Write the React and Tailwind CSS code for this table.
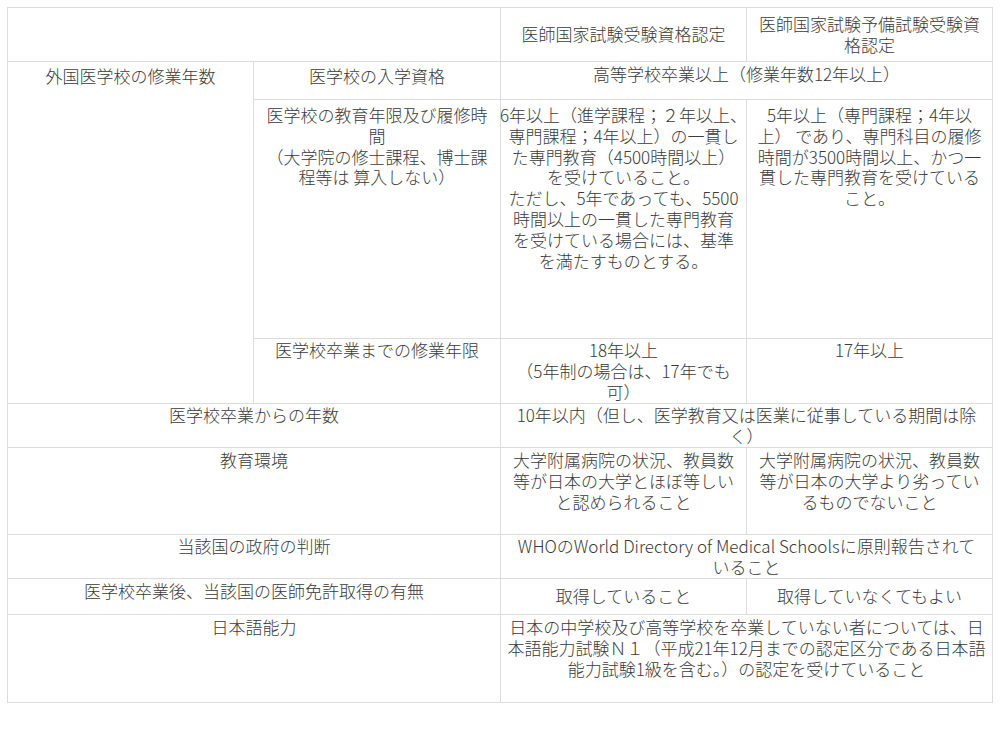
import clsx from 'clsx'

function Cell({ className = '', lines = [], middle = false }) {
  return (
    <div className={clsx('bg-white flex flex-col', middle && 'justify-center', className)}>
      {lines.map((line, i) => (
        <div key={i} className="flex justify-center whitespace-nowrap">
          {line}
        </div>
      ))}
    </div>
  )
}

function App() {
  return (
    <div className="min-h-screen bg-white pt-[7px] pl-[7px] font-['Noto_Sans_CJK_JP',sans-serif] text-[17px] font-light leading-[20.8px] text-[#3a3a3a]">
      <div className="grid w-[986px] grid-cols-[245px_246px_245px_245px] grid-rows-[53px_37px_238px_64px_43px_86px_43px_35px_87px] gap-px bg-[#dcdcdc] p-px">
        {/* header */}
        <Cell className="col-span-2" />
        <Cell middle lines={['医師国家試験受験資格認定']} />
        <Cell middle lines={['医師国家試験予備試験受験資', '格認定']} />

        {/* 修業年数 */}
        <Cell className="row-span-3 pt-[4px]" lines={['外国医学校の修業年数']} />
        <Cell className="pt-[4px]" lines={['医学校の入学資格']} />
        <Cell className="col-span-2 pt-[2px]" lines={['高等学校卒業以上（修業年数12年以上）']} />

        <Cell
          className="pt-[5px]"
          lines={['医学校の教育年限及び履修時', '間', '（大学院の修士課程、博士課', '程等は 算入しない）']}
        />
        <Cell
          className="pt-[5px]"
          lines={[
            '6年以上（進学課程；２年以上、',
            '専門課程；4年以上）の一貫し',
            'た専門教育（4500時間以上）',
            'を受けていること。',
            'ただし、5年であっても、5500',
            '時間以上の一貫した専門教育',
            'を受けている場合には、基準',
            'を満たすものとする。',
          ]}
        />
        <Cell
          className="pt-[5px]"
          lines={[
            '5年以上（専門課程；4年以',
            '上） であり、専門科目の履修',
            '時間が3500時間以上、かつ一',
            '貫した専門教育を受けている',
            'こと。',
          ]}
        />

        <Cell className="pt-[1px]" lines={['医学校卒業までの修業年限']} />
        <Cell className="pt-[1px]" lines={['18年以上', '（5年制の場合は、17年でも', '可）']} />
        <Cell className="pt-[1px]" lines={['17年以上']} />

        {/* 卒業からの年数 */}
        <Cell className="col-span-2 pt-[1px]" lines={['医学校卒業からの年数']} />
        <Cell
          className="col-span-2 pt-[1px]"
          lines={['10年以内（但し、医学教育又は医業に従事している期間は除', 'く）']}
        />

        {/* 教育環境 */}
        <Cell className="col-span-2 pt-[2px]" lines={['教育環境']} />
        <Cell
          className="pt-[2px]"
          lines={['大学附属病院の状況、教員数', '等が日本の大学とほぼ等しい', 'と認められること']}
        />
        <Cell
          className="pt-[2px]"
          lines={['大学附属病院の状況、教員数', '等が日本の大学より劣ってい', 'るものでないこと']}
        />

        {/* 政府の判断 */}
        <Cell className="col-span-2 pt-[1px]" lines={['当該国の政府の判断']} />
        <Cell
          className="col-span-2 pt-[1px]"
          lines={['WHOのWorld Directory of Medical Schoolsに原則報告されて', 'いること']}
        />

        {/* 医師免許 */}
        <Cell className="col-span-2 pt-[2px]" lines={['医学校卒業後、当該国の医師免許取得の有無']} />
        <Cell middle lines={['取得していること']} />
        <Cell middle lines={['取得していなくてもよい']} />

        {/* 日本語能力 */}
        <Cell className="col-span-2 pt-[2px]" lines={['日本語能力']} />
        <Cell
          className="col-span-2 pt-[2px]"
          lines={[
            '日本の中学校及び高等学校を卒業していない者については、日',
            '本語能力試験Ｎ１（平成21年12月までの認定区分である日本語',
            '能力試験1級を含む。）の認定を受けていること',
          ]}
        />
      </div>
    </div>
  )
}

export default App
